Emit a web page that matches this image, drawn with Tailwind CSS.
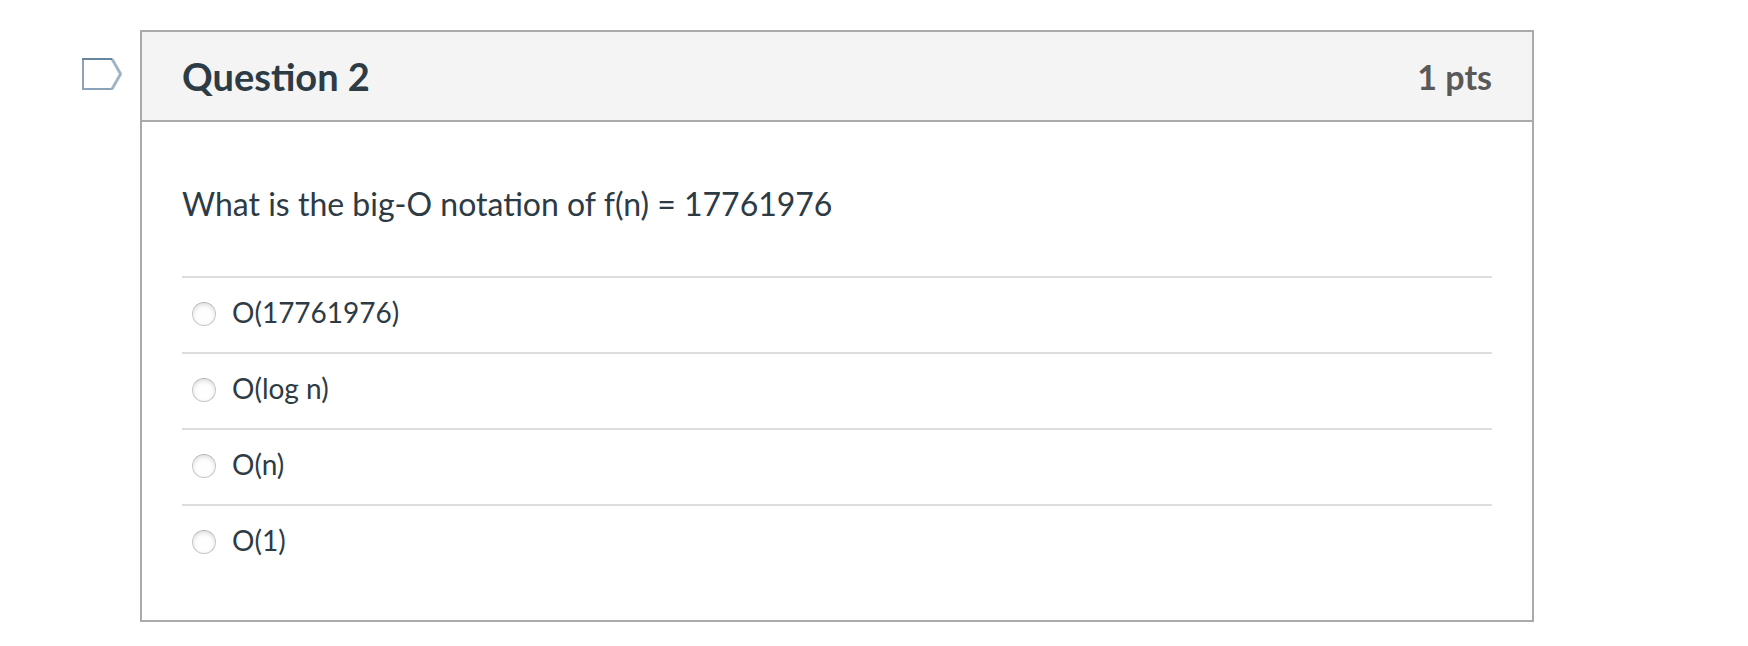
<!DOCTYPE html>
<html lang="en">
<head>
<meta charset="utf-8">
<meta name="viewport" content="width=device-width, initial-scale=1">
<title>Question 2</title>
<script src="https://cdn.jsdelivr.net/npm/@tailwindcss/browser@4"></script>
</head>
<body class="bg-white font-['Lato',sans-serif] text-[#2d3b45]">
<main class="flex items-start gap-[18px] pt-[30px] pr-[214px] pb-6 pl-[82px]">
  <button type="button" aria-label="Flag question" class="mt-7 shrink-0">
    <svg class="block" width="40" height="32" viewBox="0 0 40 32" fill="none" stroke-width="2">
      <path d="M1 1V31H30L39 16L30 1" stroke="#8aa3b8"/>
      <path d="M30 1L38.5 16L30 31" stroke="#b9c8d5" stroke-width="3"/>
      <path d="M30 1L38.5 16L30 31" stroke="#9db2c3"/>
      <path d="M0 1H30" stroke="#66859f"/>
    </svg>
  </button>
  <section class="min-w-0 grow border-2 border-[#aaa]">
    <header class="flex items-start justify-between border-b-2 border-[#aaa] bg-[#f4f4f4] px-10 pt-5 pb-5">
      <h1 class="text-[38px] leading-[48px] font-bold">Question 2</h1>
      <span class="pt-px text-[34px] leading-[47px] font-bold text-[#595959]">1 pts</span>
    </header>
    <form class="px-10 pt-[58px] pb-10">
      <fieldset>
        <legend class="pb-12 text-[32px] leading-[48px]">What is the big-O notation of f(n) = 17761976</legend>
        <label class="flex h-[76px] items-start gap-4 border-t-2 border-[#ddd] pt-3.5 pl-[10px] text-[28px] leading-[40px]">
          <input type="radio" name="answer" class="mt-2.5 size-6 shrink-0 appearance-none rounded-full border border-[#c8c8c8] border-t-[#b4b4b4] bg-[#fefefe] shadow-[inset_0_2px_4px_#00000020] checked:bg-[#2d3b45]">
          <span>O(17761976)</span>
        </label>
        <label class="flex h-[76px] items-start gap-4 border-t-2 border-[#ddd] pt-3.5 pl-[10px] text-[28px] leading-[40px]">
          <input type="radio" name="answer" class="mt-2.5 size-6 shrink-0 appearance-none rounded-full border border-[#c8c8c8] border-t-[#b4b4b4] bg-[#fefefe] shadow-[inset_0_2px_4px_#00000020] checked:bg-[#2d3b45]">
          <span>O(log n)</span>
        </label>
        <label class="flex h-[76px] items-start gap-4 border-t-2 border-[#ddd] pt-3.5 pl-[10px] text-[28px] leading-[40px]">
          <input type="radio" name="answer" class="mt-2.5 size-6 shrink-0 appearance-none rounded-full border border-[#c8c8c8] border-t-[#b4b4b4] bg-[#fefefe] shadow-[inset_0_2px_4px_#00000020] checked:bg-[#2d3b45]">
          <span>O(n)</span>
        </label>
        <label class="flex h-[76px] items-start gap-4 border-t-2 border-[#ddd] pt-3.5 pl-[10px] text-[28px] leading-[40px]">
          <input type="radio" name="answer" class="mt-2.5 size-6 shrink-0 appearance-none rounded-full border border-[#c8c8c8] border-t-[#b4b4b4] bg-[#fefefe] shadow-[inset_0_2px_4px_#00000020] checked:bg-[#2d3b45]">
          <span>O(1)</span>
        </label>
      </fieldset>
    </form>
  </section>
</main>
</body>
</html>
